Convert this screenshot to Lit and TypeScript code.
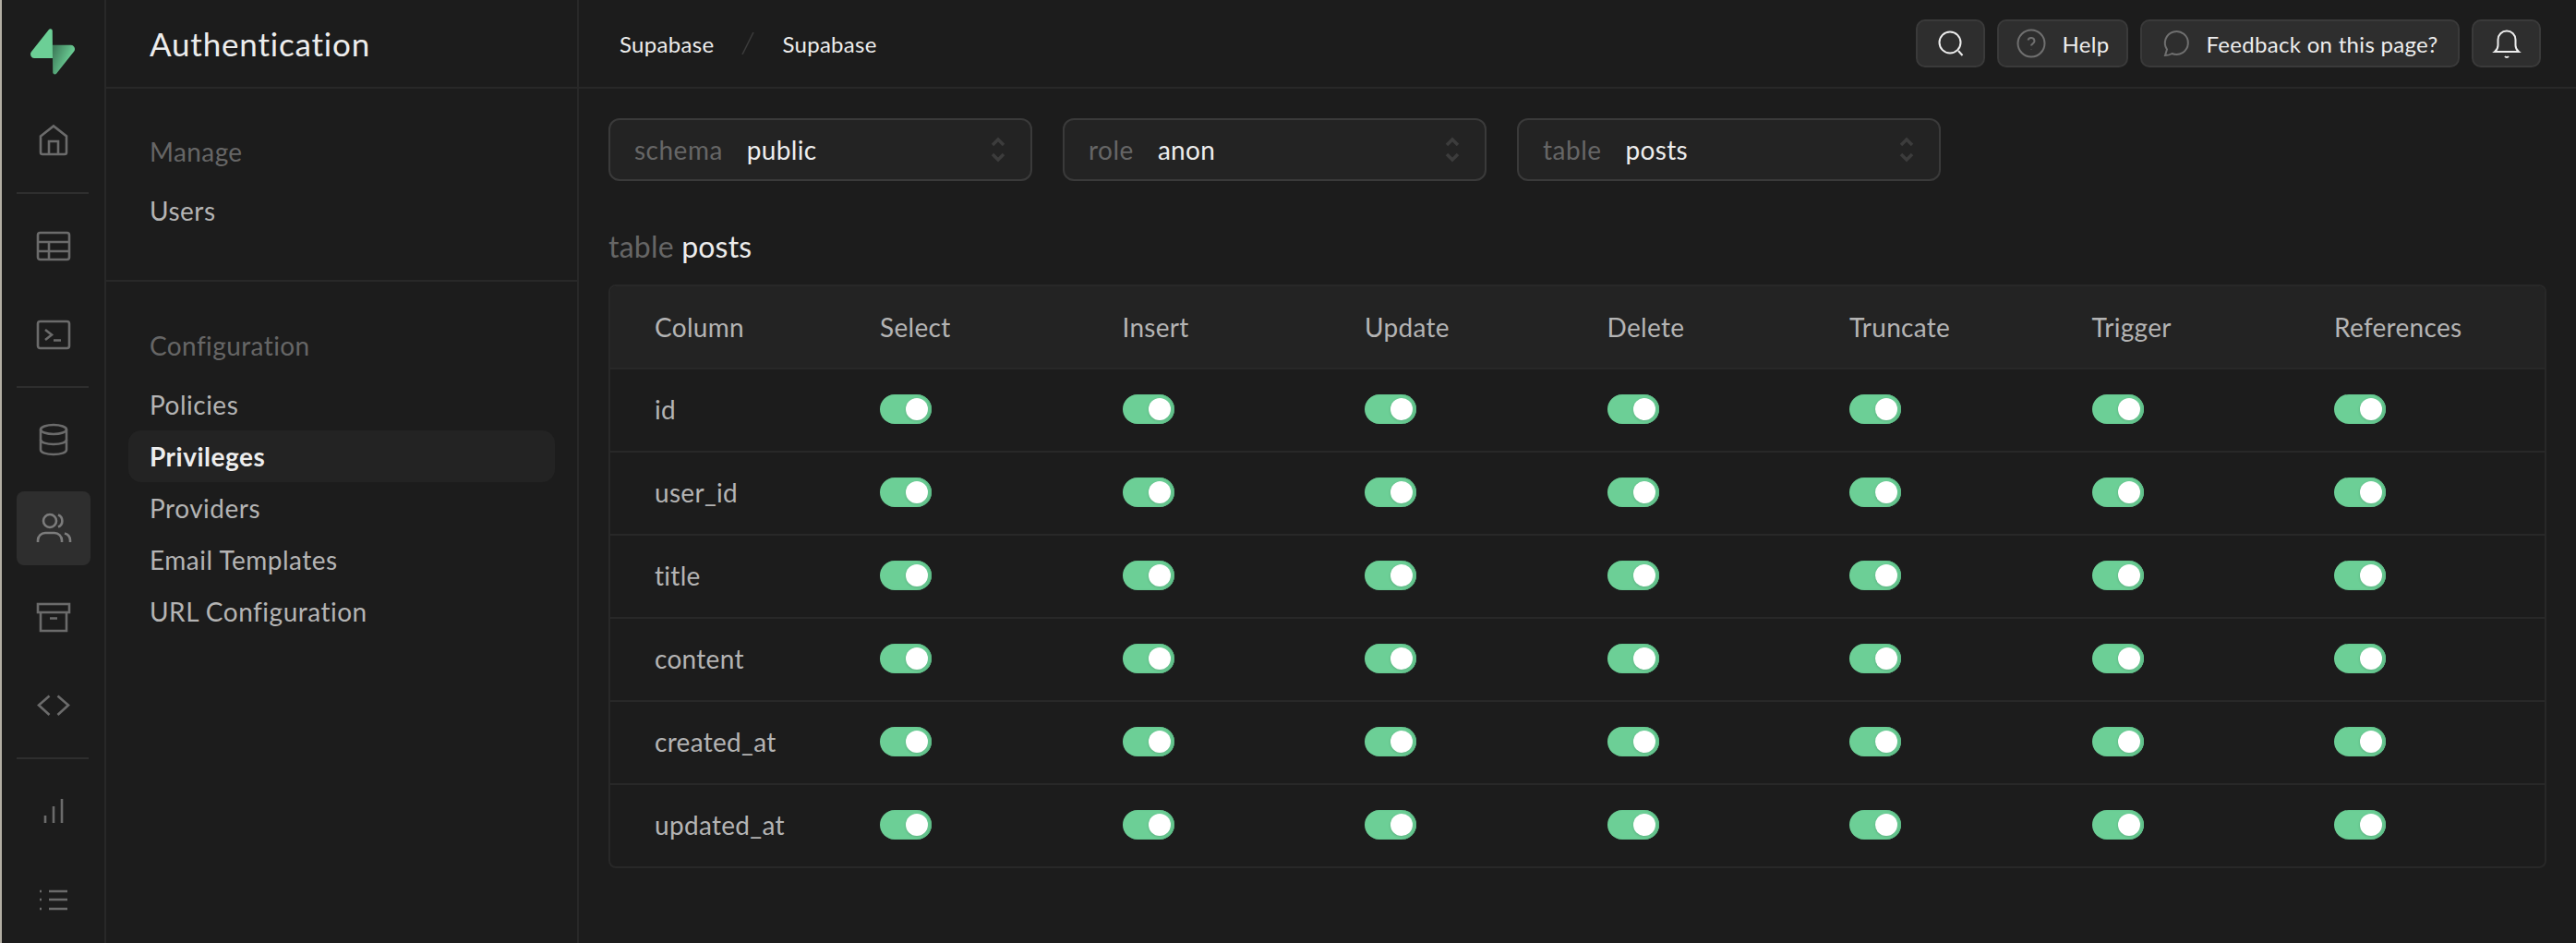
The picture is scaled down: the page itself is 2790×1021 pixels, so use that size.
import { LitElement, html, css, svg } from "lit";
import { customElement } from "lit/decorators.js";

const railIcons: Record<string, unknown> = {
  home: svg`<path d="M6 15.500 20 4.500l14 11V33a2 2 0 0 1-2 2H8a2 2 0 0 1-2-2Z"/><path d="M15 35V21h10v14"/>`,
  table: svg`<rect x="3" y="6" width="34" height="29" rx="2.500"/><path d="M3 16h34M3 26h34M15 16v19"/>`,
  terminal: svg`<rect x="3" y="6" width="34" height="29" rx="2.500"/><path d="m11 15 7 5.500-7 5.500M20 26.500h8"/>`,
  database: svg`<ellipse cx="20" cy="9" rx="14" ry="5"/><path d="M6 9v22c0 3 6.300 5 14 5s14-2 14-5V9"/><path d="M6 20c0 3 6.300 5 14 5s14-2 14-5"/>`,
  users: svg`<circle cx="16" cy="12" r="7"/><path d="M25 5.500a7 7 0 0 1 0 13"/><path d="M3 35v-2a8 8 0 0 1 8-8h10a8 8 0 0 1 8 8v2"/><path d="M38 35v-2a8 8 0 0 0-6-7.500"/>`,
  archive: svg`<rect x="3" y="6" width="34" height="9"/><path d="M6 15v20h28V15M16 21.500h8"/>`,
  code: svg`<path d="M15.500 9.500 4 19.500 15.500 30M24.500 9.500 36 19.500 24.500 30"/>`,
  chart: svg`<path d="M11 33v-8M20 33V15M29 33V7"/>`,
  list: svg`<path d="M15 11h20M15 20h20M15 30h20M5 11h2M5 20h2M5 30h2"/>`,
};

const groups = [["home"], ["table", "terminal"], ["database", "users", "archive", "code"], ["chart", "list"]];
const columns = ["id", "user_id", "title", "content", "created_at", "updated_at"];
const privileges = ["Select", "Insert", "Update", "Delete", "Truncate", "Trigger", "References"];
const selects = [["schema", "public"], ["role", "anon"], ["table", "posts"]];

@customElement("app-root")
export class AppRoot extends LitElement {
  static styles = css`
    :host { display: block; height: 1021px; background: #1c1c1c; font-family: "Lato", "Liberation Sans", sans-serif; color: #b4b4b4; overflow: hidden; }
    * { box-sizing: border-box; }
    .page { display: flex; height: 1021px; border-left: 2px solid #b3afa4; }
    .rail { width: 111px; flex: none; display: flex; flex-direction: column; gap: 16px; align-items: flex-start; padding-left: 16px; }
    .logo { height: 96px; width: 80px; display: flex; justify-content: center; align-items: center; padding: 16px 2px 0 0; }
    .logo svg { width: 48px; height: 50px; }
    .rail-item { width: 80px; height: 80px; border-radius: 8px; display: flex; align-items: center; justify-content: center; }
    .rail-item.active { background: #2e2e2e; }
    .rail-item svg { width: 40px; height: 40px; fill: none; stroke: #6b6b6b; stroke-width: 2.6; }
    .rail-item.active svg { stroke: #7c7c7c; }
    .rail-sep { width: 78px; height: 2px; background: #2e2e2e; }
    .sidebar { width: 514px; flex: none; border-left: 2px solid #282828; border-right: 2px solid #282828; }
    .side-head { height: 96px; border-bottom: 2px solid #282828; padding-left: 47px; display: flex; align-items: center; font-size: 35px; color: #ededed; letter-spacing: 0.8px; }
    .side-group { padding: 41px 24px 0; display: flex; flex-direction: column; }
    .side-group.first { height: 209px; border-bottom: 2px solid #282828; padding-top: 40px; }
    .side-title { font-size: 28px; color: #666; height: 56px; line-height: 56px; padding-left: 23px; letter-spacing: 0.4px; margin-bottom: 8px; }
    .side-link { font-size: 28px; height: 56px; line-height: 56px; padding-left: 23px; border-radius: 14px; letter-spacing: 0.5px; }
    .side-link.on { background: #232323; color: #ededed; font-weight: 700; }
    .main { flex: 1; min-width: 0; }
    .topbar { height: 96px; border-bottom: 2px solid #282828; display: flex; align-items: center; padding: 0 38px 0 44px; }
    .crumb { font-size: 24px; color: #ededed; letter-spacing: 0.3px; }
    .slash { width: 14px; height: 24px; margin: 0 30px; fill: none; stroke: #3c3c3c; stroke-width: 1.5; }
    .top-actions { margin-left: auto; display: flex; gap: 13px; }
    .btn { height: 52px; border-radius: 10px; background: #2e2e2e; border: 2px solid #3a3a3a; display: flex; align-items: center; justify-content: center; font-size: 24px; color: #ededed; letter-spacing: 0.3px; }
    .btn.sq { width: 75px; }
    .btn.help { width: 142px; gap: 18px; }
    .btn.feedback { width: 346px; gap: 16px; }
    .btn svg { width: 32px; height: 32px; fill: none; stroke: #ededed; stroke-width: 2; flex: none; }
    .btn svg.dim { stroke: #707070; }
    .content { padding: 32px 32px 0; }
    .selects { display: flex; gap: 33px; }
    .select { width: 459px; height: 68px; border-radius: 12px; border: 2px solid #3a3a3a; background: #232323; display: flex; align-items: center; padding: 0 26px; font-size: 28px; letter-spacing: 0.3px; color: #ededed; }
    .select .key { color: #666; margin-right: 26px; letter-spacing: 0.5px; }
    .select svg { margin-left: auto; width: 18px; height: 30px; fill: none; stroke: #3c3c3c; stroke-width: 3.5; }
    .heading { font-size: 32px; height: 112px; padding-top: 53px; line-height: 36px; color: #ededed; letter-spacing: 0.2px; }
    .heading span { color: #666; }
    .table { width: 2099px; border: 2px solid #282828; border-radius: 8px; overflow: hidden; }
    .row { display: grid; grid-template-columns: 244px repeat(6, 262.5px) 1fr; height: 90px; align-items: center; padding: 0 0 2px 48px; font-size: 28px; border-top: 2px solid #282828; letter-spacing: 0.3px; }
    .row.head { background: #232323; height: 88px; border-top: 0; padding-bottom: 0; }
    .toggle { width: 56px; height: 32px; border-radius: 16px; background: #6ccf96; display: flex; align-items: center; justify-content: flex-end; padding-right: 4px; box-shadow: inset -2px 0 2px #5dbb86; }
    .knob { width: 24px; height: 24px; border-radius: 50%; background: #fff; box-shadow: 0 1px 3px rgba(0,0,0,.15); }
  `;

  render() {
    return html`<div class="page">
      <nav class="rail">
        <div class="logo">
          <svg viewBox="0 0 109 113">
            <defs><linearGradient id="lg" x1="54" y1="56" x2="100" y2="75" gradientUnits="userSpaceOnUse"><stop offset="0" stop-color="#3f7d5b"/><stop offset="1" stop-color="#6ccf96"/></linearGradient></defs>
            <path fill="url(#lg)" d="M63.700 110.300c-2.900 3.600-8.700 1.600-8.700-3L54 40h45.200c8.200 0 12.800 9.500 7.700 15.900L63.700 110.300Z"/>
            <path fill="#6ccf96" d="M45.300 2.100C48.200-1.500 54 .4 54 5l.5 67.300H9.800c-8.200 0-12.700-9.500-7.600-15.900L45.300 2.100Z"/>
          </svg>
        </div>
        ${groups.map((g, i) => html`
          ${i ? html`<div class="rail-sep"></div>` : ""}
          ${g.map((n) => html`<div class="rail-item ${n === "users" ? "active" : ""}"><svg viewBox="0 0 40 40">${railIcons[n]}</svg></div>`)}
        `)}
      </nav>
      <aside class="sidebar">
        <div class="side-head">Authentication</div>
        <div class="side-group first">
          <div class="side-title">Manage</div>
          <div class="side-link">Users</div>
        </div>
        <div class="side-group">
          <div class="side-title">Configuration</div>
          ${["Policies", "Privileges", "Providers", "Email Templates", "URL Configuration"].map(
            (t) => html`<div class="side-link ${t === "Privileges" ? "on" : ""}">${t}</div>`
          )}
        </div>
      </aside>
      <main class="main">
        <header class="topbar">
          <span class="crumb">Supabase</span>
          <svg class="slash" viewBox="0 0 14 24"><path d="M13 0 1 24"/></svg>
          <span class="crumb">Supabase</span>
          <div class="top-actions">
            <div class="btn sq"><svg viewBox="0 0 32 32"><circle cx="15" cy="15" r="11.500"/><path d="m24 24 4.500 5"/></svg></div>
            <div class="btn help"><svg class="dim" viewBox="0 0 32 32"><circle cx="16" cy="16" r="14.500"/><path d="M12.500 12.500a3.600 3.600 0 0 1 7 1c0 2.300-3.500 3-3.500 5M16 22.500v.2"/></svg>Help</div>
            <div class="btn feedback"><svg class="dim" viewBox="0 0 32 32"><path d="M3 29l2-6.500A12.500 12.500 0 1 1 10.500 27c-2.500 1.500-5 2-7.500 2Z"/></svg>Feedback on this page?</div>
            <div class="btn sq"><svg viewBox="0 0 32 32"><path d="M3 25c2.500-2 3.500-4 3.500-7v-6a9.500 9.500 0 0 1 19 0v6c0 3 1 5 3.500 7ZM14 30a2.500 2.500 0 0 0 4 0"/></svg></div>
          </div>
        </header>
        <section class="content">
          <div class="selects">
            ${selects.map(([k, v]) => html`<div class="select"><span class="key">${k}</span>${v}
              <svg viewBox="0 0 18 30"><path d="m3 10 6-6 6 6M3 20l6 6 6-6"/></svg></div>`)}
          </div>
          <div class="heading"><span>table</span> posts</div>
          <div class="table">
            <div class="row head"><div>Column</div>${privileges.map((p) => html`<div>${p}</div>`)}</div>
            ${columns.map((c) => html`<div class="row"><div>${c}</div>${privileges.map(() => html`<div class="toggle"><div class="knob"></div></div>`)}</div>`)}
          </div>
        </section>
      </main>
    </div>`;
  }
}
